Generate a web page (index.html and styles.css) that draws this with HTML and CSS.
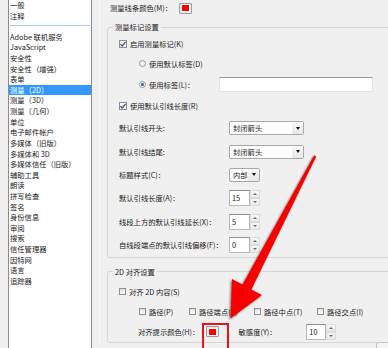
FILE: index.html
```html
<!DOCTYPE html>
<html lang="zh-CN">
<head>
<meta charset="UTF-8">
<title>首选项 - 测量（2D）</title>
<link rel="stylesheet" href="styles.css">
</head>
<body>

<div class="window">
    <ul class="catlist">
        <li>一般</li>
        <li>注释</li>
        <li class="sep"></li>
        <li>Adobe 联机服务</li>
        <li>JavaScript</li>
        <li>安全性</li>
        <li>安全性（增强）</li>
        <li>表单</li>
        <li class="selected">测量（2D）</li>
        <li>测量（3D）</li>
        <li>测量（几何）</li>
        <li>单位</li>
        <li>电子邮件帐户</li>
        <li>多媒体（旧版）</li>
        <li>多媒体和 3D</li>
        <li>多媒体信任（旧版）</li>
        <li>辅助工具</li>
        <li>朗读</li>
        <li>拼写检查</li>
        <li>签名</li>
        <li>身份信息</li>
        <li>审阅</li>
        <li>搜索</li>
        <li>信任管理器</li>
        <li>因特网</li>
        <li>语言</li>
        <li>追踪器</li>
    </ul>

    <div class="panel">
        <div class="colorline">
            <span class="colorline-label">测量线条颜色(M)：</span>
            <span class="swatch"><i></i></span>
        </div>

        <fieldset class="group">
            <legend>测量标记设置</legend>
            <div class="group-body">
                <div class="row r19"><span class="box on"><svg viewBox="0 0 7 7"><path d="M1.2 3.6 L2.8 5.2 L5.8 1.6" fill="none" stroke="#3b5393" stroke-width="1.2"/></svg></span>启用测量标记(K)</div>
                <div class="row r20 indent"><span class="radio"></span>使用默认标签(D)</div>
                <div class="row r22 indent"><span class="radio on"></span><span class="lbl-short">使用标签(L)：</span><span class="textbox"></span></div>
                <div class="row r21"><span class="box on"><svg viewBox="0 0 7 7"><path d="M1.2 3.6 L2.8 5.2 L5.8 1.6" fill="none" stroke="#3b5393" stroke-width="1.2"/></svg></span>使用默认引线长度(R)</div>
                <div class="row"><span class="lbl">默认引线开头:</span><span class="select"><span>封闭箭头</span><b class="drop"></b></span></div>
                <div class="row"><span class="lbl">默认引线结尾:</span><span class="select"><span>封闭箭头</span><b class="drop"></b></span></div>
                <div class="row"><span class="lbl">标题样式(C)：</span><span class="select small"><span>内部</span><b class="drop"></b></span></div>
                <div class="row"><span class="lbl">默认引线长度(A)：</span><span class="spin"><span class="field">15</span><span class="btns"><b class="up"></b><b class="down"></b></span></span></div>
                <div class="row"><span class="lbl">线段上方的默认引线延长(X)：</span><span class="spin"><span class="field">5</span><span class="btns"><b class="up"></b><b class="down"></b></span></span></div>
                <div class="row"><span class="lbl">自线段端点的默认引线偏移(F)：</span><span class="spin"><span class="field">0</span><span class="btns"><b class="up"></b><b class="down"></b></span></span></div>
            </div>
        </fieldset>

        <fieldset class="group second">
            <legend>2D 对齐设置</legend>
            <div class="group-body">
                <div class="row r20"><span class="box"></span>对齐 2D 内容(S)</div>
                <div class="row r20 indent">
                    <span class="opt w50"><span class="box"></span>路径(P)</span>
                    <span class="opt w65"><span class="box"></span>路径端点(E)</span>
                    <span class="opt w63"><span class="box"></span>路径中点(T)</span>
                    <span class="opt"><span class="box"></span>路径交点(I)</span>
                </div>
                <div class="row r20 indent-hint">
                    <span class="lbl-hint">对齐提示颜色(H)：</span>
                    <span class="swatch"><i></i></span>
                    <span class="lbl-sense">敏感度(Y)：</span>
                    <span class="spin narrow"><span class="field">10</span><span class="btns"><b class="up"></b><b class="down"></b></span></span>
                    <span class="corner-btn"></span>
                </div>
            </div>
        </fieldset>
    </div>
</div>

<!-- annotation drawn over the dialog -->
<svg class="arrow-mark" viewBox="0 0 388 348">
    <polygon points="314.2,155.2 316.2,156.4 251.4,289.4 262,295 230.5,318.5 232,279 242.6,284.6" fill="#f80000"/>
</svg>
<div class="callout"></div>

</body>
</html>
```

FILE: styles.css
```css
* {
    box-sizing: border-box;
}
html, body {
    margin: 0;
}
body {
    position: relative;
    width: 388px;
    height: 348px;
    overflow: hidden;
    background: #f0f0f0;
    font-family: "Noto Sans CJK SC", "Noto Sans", sans-serif;
    font-size: 7.3px;
    color: #1a1a1a;
}
.window {
    display: flex;
    align-items: flex-start;
}

/* category list */
.catlist {
    flex-shrink: 0;
    list-style: none;
    margin: -1px 0 0 8px;
    padding: 0;
    width: 84px;
    height: 360px;
    background: #fff;
    border: 1px solid #8c8c8c;
}
.catlist li {
    height: 10.62px;
    line-height: 10.62px;
    padding-left: 1px;
    white-space: nowrap;
}
.catlist li.sep {
    padding: 4px 1px 0;
}
.catlist li.sep::after {
    content: "";
    display: block;
    border-top: 1px solid #a9c9ec;
}
.catlist li.selected {
    background: #3399ff;
    color: #fff;
}

/* settings panel */
.panel {
    flex-shrink: 0;
    width: 300px;
    margin-left: 7px;
    padding-left: 7px;
    border-left: 1px solid #fafafa;
}
.colorline {
    display: flex;
    align-items: center;
    height: 16px;
    padding-left: 3px;
}
.colorline-label {
    width: 69px;
}
.swatch {
    display: flex;
    align-items: center;
    justify-content: center;
    width: 13px;
    height: 11px;
    border: 1px solid #9c9c9c;
    border-radius: 1px;
    background: #ececec;
}
.swatch i {
    width: 7px;
    height: 6px;
    background: #f00;
    box-shadow: 0 0 0 1px #fff;
}

.group {
    width: 290px;
    min-width: 0;
    margin: 5px 0 0;
    padding: 1.5px 0 0 5px;
    border: 1px solid #d6d6d6;
    border-radius: 3px;
}
.group.second {
    margin-top: 8px;
    padding-top: 4px;
}
.group legend {
    padding: 0 2px;
    line-height: 12px;
}
.group-body {
    padding-left: 6px;
}

.row {
    display: flex;
    align-items: center;
    height: 23.4px;
    white-space: nowrap;
}
.row.r19 { height: 19px; }
.row.r20 { height: 20px; }
.row.r21 { height: 21px; }
.row.r22 { height: 22px; }
.row.indent {
    padding-left: 20px;
}
.row.indent-hint {
    padding-left: 19px;
}

.lbl {
    width: 110px;
}
.lbl-short {
    width: 70px;
}
.lbl-hint {
    width: 69px;
}
.lbl-sense {
    width: 69px;
    margin-left: 20px;
}
.opt {
    display: flex;
    align-items: center;
}
.opt.w50 { width: 50px; }
.opt.w65 { width: 65px; }
.opt.w63 { width: 63px; }

/* check boxes and radios */
.box {
    flex-shrink: 0;
    display: inline-flex;
    width: 7px;
    height: 7px;
    margin-right: 3px;
    border: 1px solid #8e8e8e;
    background: linear-gradient(#e2e2e2, #fafafa);
}
.box svg {
    width: 100%;
    height: 100%;
}
.box.on {
    background: #f6f6f6;
    width: 8px;
    height: 8px;
}
.box.on svg {
    margin: -1px;
    width: 8px;
    height: 8px;
}
.radio {
    flex-shrink: 0;
    display: inline-flex;
    align-items: center;
    justify-content: center;
    width: 7px;
    height: 7px;
    margin-right: 3px;
    border: 1px solid #9a9a9a;
    border-radius: 50%;
    background: #f2f2f2;
}
.radio.on::after {
    content: "";
    width: 3px;
    height: 3px;
    border-radius: 50%;
    background: #2b5fb8;
}

/* inputs */
.textbox {
    width: 154px;
    height: 15px;
    background: #fff;
    border: 1px solid #e3e3e3;
    border-top-color: #9a9a9a;
}
.select {
    display: flex;
    align-items: center;
    width: 75px;
    height: 14px;
    padding-left: 3px;
    background: #fff;
    border: 1px solid #a8a8a8;
    border-radius: 2px;
}
.select.small {
    width: 31px;
}
.select span {
    flex: 1;
}
.select .drop {
    display: flex;
    align-items: center;
    justify-content: center;
    width: 11px;
    height: 100%;
    background: linear-gradient(#f8f8f8, #e6e6e6);
}
.select .drop::after {
    content: "";
    border-left: 2.5px solid transparent;
    border-right: 2.5px solid transparent;
    border-top: 3px solid #111;
}
.spin {
    display: flex;
    height: 16px;
}
.spin .field {
    width: 21px;
    padding-left: 2px;
    line-height: 14px;
    background: #fff;
    border: 1px solid #b8b8b8;
    border-top-color: #8f8f8f;
}
.spin.narrow .field {
    width: 20px;
}
.spin .btns {
    display: flex;
    flex-direction: column;
    width: 10px;
}
.spin .btns b {
    flex: 1;
    display: flex;
    align-items: center;
    justify-content: center;
    border: 1px solid #dcdcdc;
    background: linear-gradient(#f7f7f7, #e8e8e8);
}
.spin .btns b::after {
    content: "";
    border-left: 2px solid transparent;
    border-right: 2px solid transparent;
}
.spin .btns b.up::after {
    border-bottom: 2px solid #5a6b8c;
}
.spin .btns b.down::after {
    border-top: 2px solid #5a6b8c;
}
.corner-btn {
    align-self: flex-end;
    width: 20px;
    height: 8px;
    margin: 0 0 -8px 40px;
    border: 1px solid #c4c4c4;
    border-radius: 2px;
    background: #f4f4f4;
}

/* red annotation */
.arrow-mark {
    position: absolute;
    left: 0;
    top: 0;
    width: 388px;
    height: 348px;
    filter: drop-shadow(-1px 1px 1px rgba(0, 0, 0, 0.55));
    pointer-events: none;
}
.callout {
    position: absolute;
    left: 202px;
    top: 323px;
    width: 27px;
    height: 30px;
    border: 2px solid #e8151b;
}
```
